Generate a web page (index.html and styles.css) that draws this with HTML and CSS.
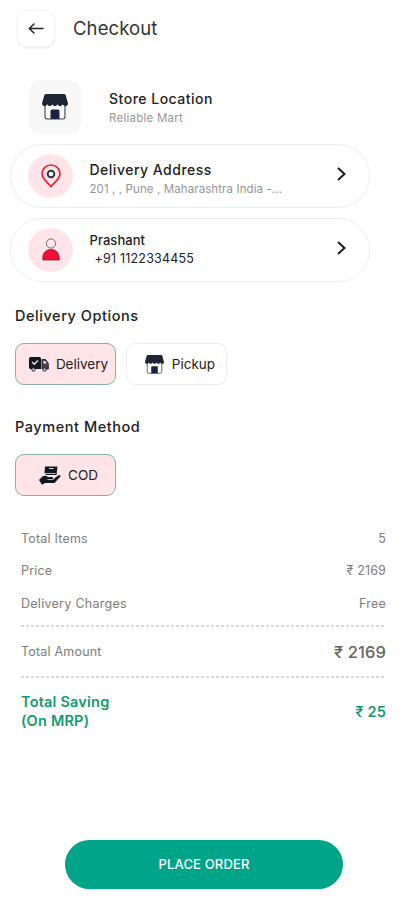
FILE: index.html
```html
<!DOCTYPE html>
<html lang="en">
<head>
<meta charset="utf-8">
<meta name="viewport" content="width=device-width, initial-scale=1">
<title>Checkout</title>
<link rel="stylesheet" href="styles.css">
</head>
<body>
<svg width="0" height="0" class="defs" aria-hidden="true">
  <symbol id="store" viewBox="0 0 26 28">
    <path d="M3 10h20v13.500q0 2.500-2.500 2.500h-15q-2.500 0-2.500-2.500z" fill="#fff" stroke="#3b424b" stroke-width="1.100"/>
    <path d="M4 1h18q1.500 0 1.800 1.500L26 10.500c0 3-4.200 3.500-5.200.8-.8 2.400-4.400 2.400-5.200 0-.8 2.400-4.400 2.400-5.200 0-.8 2.400-4.400 2.400-5.200 0C4.200 14 0 13.500 0 10.500l2.200-8Q2.500 1 4 1z" fill="#1c2733"/>
    <path d="M8.500 26v-8q0-1.500 1.500-1.500h6q1.500 0 1.500 1.500v8z" fill="#1b2140"/>
  </symbol>
</svg>
<main class="screen">
  <header class="header">
    <button class="back" aria-label="Back"><svg width="16" height="12" viewBox="0 0 16 12"><path d="M15 5.500H1.500M6 1 1.300 5.500 6 10" fill="none" stroke="#222" stroke-width="1.500" stroke-linecap="round" stroke-linejoin="round"/></svg></button>
    <h1 class="title">Checkout</h1>
  </header>
  <section class="store">
    <div class="tile"><svg width="26" height="28"><use href="#store"/></svg></div>
    <div><div class="name store-name">Store Location</div><div class="sub store-sub">Reliable Mart</div></div>
  </section>
  <section class="card">
    <div class="circle"><svg width="20" height="24" viewBox="0 0 20 24"><path d="M10 22.500C7.500 19.500 1 15 1 9.800a9 8.800 0 0 1 18 0C19 15 12.500 19.500 10 22.500z" fill="none" stroke="#ee2034" stroke-width="1.700"/><circle cx="10" cy="10" r="3.300" fill="#fff" stroke="#303044" stroke-width="1.900"/></svg></div>
    <div class="grow"><div class="name address">Delivery Address</div><div class="sub address-sub">201 , , Pune , Maharashtra India -...</div></div>
    <svg class="chev" width="9" height="14" viewBox="0 0 9 14"><path d="m1 1 6.500 6L1 13" fill="none" stroke="#171717" stroke-width="1.900"/></svg>
  </section>
  <section class="card">
    <div class="circle"><svg class="user" width="18" height="24" viewBox="0 0 18 24"><circle cx="9" cy="6.500" r="4.600" fill="#ffe9ed" stroke="#74656b" stroke-width="1"/><path d="M.8 23v-2C.8 16 4 12.500 9 12.500s8.200 3.500 8.200 8.500v2z" fill="#ee1230" stroke="#8b1c35" stroke-width=".8"/></svg></div>
    <div class="grow contact"><div class="name person">Prashant</div><div class="phone">+91 1122334455</div></div>
    <svg class="chev" width="9" height="14" viewBox="0 0 9 14"><path d="m1 1 6.500 6L1 13" fill="none" stroke="#171717" stroke-width="1.900"/></svg>
  </section>
  <h2 class="heading delivery-heading">Delivery Options</h2>
  <div class="options">
    <button class="option selected"><svg width="20" height="15" viewBox="0 0 20 15"><path d="M1.500 0h9q1.500 0 1.500 1.500V12H1.500Q0 12 0 10.500v-9Q0 0 1.500 0z" fill="#111820"/><path d="m3 5 2.300 2.300L9 3.500" fill="none" stroke="#ffe3e8" stroke-width="1.300"/><path d="M13 2.500h3.500l2.800 4V12H13z" fill="#4b4148" stroke="#292830"/><path d="M14.500 4h1.700l1.600 2.500h-3.300z" fill="#ffe3e8"/><circle cx="4.500" cy="12.500" r="1.700" fill="#cfc4c9" stroke="#222b35"/><circle cx="15.500" cy="12.500" r="1.700" fill="#cfc4c9" stroke="#222b35"/></svg><span>Delivery</span></button>
    <button class="option pickup"><svg width="19" height="21"><use href="#store"/></svg><span>Pickup</span></button>
  </div>
  <h2 class="heading payment-heading">Payment Method</h2>
  <div class="options">
    <button class="option selected cod"><svg width="22" height="19" viewBox="0 0 22 19"><path d="M6 .5h12.500L17.500 9H7L5.500 7z" fill="#111820"/><path d="M10 2.500h4.500" stroke="#e8dce1"/><path d="M5.500 7.500h11" stroke="#e8dce1" stroke-width=".8"/><path d="M0 14l4-4q3-1 5 1h4q2 .5.500 2.200H14L20 9q2 0 1.500 1.500L15.500 17H6l-3 1.800z" fill="#111820"/><path d="M8.500 13.500H14l1.500-1.300" fill="none" stroke="#d8cbd1" stroke-width=".8"/></svg><span>COD</span></button>
  </div>
  <section class="summary">
    <div class="row"><span>Total Items</span><span>5</span></div>
    <div class="row"><span>Price</span><span class="value">₹ 2169</span></div>
    <div class="row"><span class="charges">Delivery Charges</span><span>Free</span></div>
    <div class="rule"></div>
    <div class="row amount"><span>Total Amount</span><strong class="total">₹ 2169</strong></div>
    <div class="rule"></div>
    <div class="row saving"><span>Total Saving<br>(On MRP)</span><span>₹ 25</span></div>
  </section>
  <button class="order">PLACE ORDER</button>
</main>
</body>
</html>
```
FILE: styles.css
```css
* { box-sizing: border-box; }
body { margin: 0; background: #fff; color: #222; font-family: Inter, "Noto Sans", sans-serif; }
button { font: inherit; color: inherit; padding: 0; }
h1, h2 { margin: 0; }
svg { display: block; flex: none; }
.defs { position: absolute; }
.screen { width: 406px; height: 900px; display: flex; flex-direction: column; overflow: hidden; }
.header { display: flex; align-items: center; gap: 18px; padding: 10px 17px 0; }
.back { width: 38px; height: 37px; display: grid; place-items: center; border: 1px solid #f7f7f7; border-radius: 11px; background: #fff; box-shadow: 0 1px 3px #00000018; }
.title { font-size: 18.500px; font-weight: 400; line-height: 24px; letter-spacing: .1px; color: #333; padding-bottom: 1px; }
.store { display: flex; align-items: center; gap: 28px; margin: 33px 0 0 29px; height: 54px; }
.tile { width: 52px; height: 54px; border-radius: 12px; background: #f7f7f8; display: grid; place-items: center; }
.name { font-size: 14px; line-height: 20px; font-weight: 500; letter-spacing: .5px; white-space: nowrap; }
.sub { font-size: 11.500px; line-height: 18px; color: #969696; letter-spacing: .1px; white-space: nowrap; }
.store-sub { letter-spacing: .25px; }
.store > div:last-child { padding-top: 2px; }
.card { width: 360px; height: 64px; margin: 10px 0 0 10px; padding: 0 23px 0 17px; border: 1px solid #eee; border-radius: 32px; display: flex; align-items: center; }
.circle { width: 45px; height: 44px; border-radius: 50%; background: #ffe5e9; display: grid; place-items: center; margin-right: 16.500px; }
.user { margin-top: -3px; }
.grow { flex: 1; padding-top: 5px; }
.contact { padding: 0 0 3px; }
.person { font-size: 13px; letter-spacing: .05px; }
.phone { font-size: 12.500px; line-height: 18px; padding-left: 5px; letter-spacing: .2px; }
.chev { margin-top: -4px; }
.heading { font-size: 14.500px; line-height: 20px; font-weight: 550; letter-spacing: .55px; margin-left: 15px; width: max-content; }
.delivery-heading { margin-top: 24px; }
.payment-heading { margin-top: 32px; }
.options { display: flex; gap: 10px; margin: 17px 0 0 15px; }
.option { width: 101px; height: 42px; display: flex; align-items: center; justify-content: center; gap: 7px; padding-left: 6px; border: 1px solid #eee; border-radius: 9px; background: #fff; font-size: 13.500px; }
.pickup { gap: 8px; padding-left: 7px; }
.selected { background: #ffe4e8; border-color: #86b3a4; }
.summary { margin: 26px 20px 0 21px; color: #7d7d7d; font-size: 12.500px; letter-spacing: .2px; }
.row { height: 32.500px; display: flex; align-items: center; justify-content: space-between; }
.value { letter-spacing: .15px; }
.charges { letter-spacing: .28px; }
.rule { height: 2px; margin-top: 5px; background: repeating-linear-gradient(90deg, #d9d9d9 0 3px, transparent 3px 5px); }
.amount { height: 44px; padding-top: 6px; }
.total { font-size: 16.500px; font-weight: 450; letter-spacing: .1px; color: #666; }
.saving { height: 62px; padding-top: 5px; color: #139b70; font-size: 14.500px; line-height: 19px; font-weight: 600; }
.order { width: 278px; height: 49px; margin: 100px 0 0 65px; border: 0; border-radius: 25px; background: #00a488; color: #fff; font-size: 13px; font-weight: 500; letter-spacing: .15px; }
```
